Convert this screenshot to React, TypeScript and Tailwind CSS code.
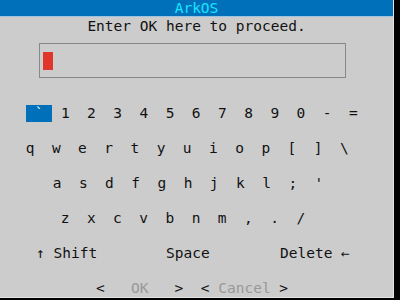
const rows: { left: string; keys: string[] }[] = [
  { left: "pl-[26px]", keys: ["`", "1", "2", "3", "4", "5", "6", "7", "8", "9", "0", "-", "="] },
  { left: "pl-[17px]", keys: ["q", "w", "e", "r", "t", "y", "u", "i", "o", "p", "[", "]", "\\"] },
  { left: "pl-[44px]", keys: ["a", "s", "d", "f", "g", "h", "j", "k", "l", ";", "'"] },
  { left: "pl-[52px]", keys: ["z", "x", "c", "v", "b", "n", "m", ",", ".", "/"] },
];

export default function App() {
  return (
    <div
      className="h-[300px] w-[400px] bg-black text-[14.5px] text-[#111]"
      style={{ fontFamily: '"DejaVu Sans Mono", "Liberation Mono", monospace' }}
    >
      <div className="flex h-[298px] w-[394px] flex-col overflow-hidden border-r border-b border-[#e4e4e4] bg-[#cccccc]">
        <div className="h-[17px] shrink-0 border-b border-[#9cc3e0] bg-[#0070bb] pt-[1px] text-center leading-[15px] text-[#19e6ff]">
          ArkOS
        </div>
        <div className="h-[19px] shrink-0 text-center leading-[19px]">Enter OK here to proceed.</div>
        <div className="ml-[39px] mt-[7px] flex h-[35px] w-[307px] shrink-0 items-center border border-[#888] pl-[3px]">
          <div className="h-[18px] w-[10px] bg-[#e0352b]" />
        </div>
        <div className="mt-[18px] flex flex-col">
          {rows.map((row, r) => (
            <div key={r} className={`flex h-[35px] items-center ${row.left}`}>
              {row.keys.map((k, i) => (
                <div
                  key={i}
                  className={
                    r === 0 && i === 0
                      ? "h-[17px] w-[26.2px] bg-[#0070bb] text-center leading-[17px] text-white"
                      : "h-[17px] w-[26.2px] text-center leading-[17px]"
                  }
                >
                  {k}
                </div>
              ))}
            </div>
          ))}
          <div className="flex h-[35px] items-center whitespace-pre pl-[36px]">
            <span className="w-[130px]">↑ Shift</span>
            <span className="w-[114px]">Space</span>
            <span>Delete ←</span>
          </div>
          <div className="flex h-[35px] items-center whitespace-pre pl-[96px]">
            <span>{"<   "}</span>
            <span className="text-[#999]">OK</span>
            <span>{"   >  < "}</span>
            <span className="text-[#999]">Cancel</span>
            <span>{" >"}</span>
          </div>
        </div>
      </div>
    </div>
  );
}
